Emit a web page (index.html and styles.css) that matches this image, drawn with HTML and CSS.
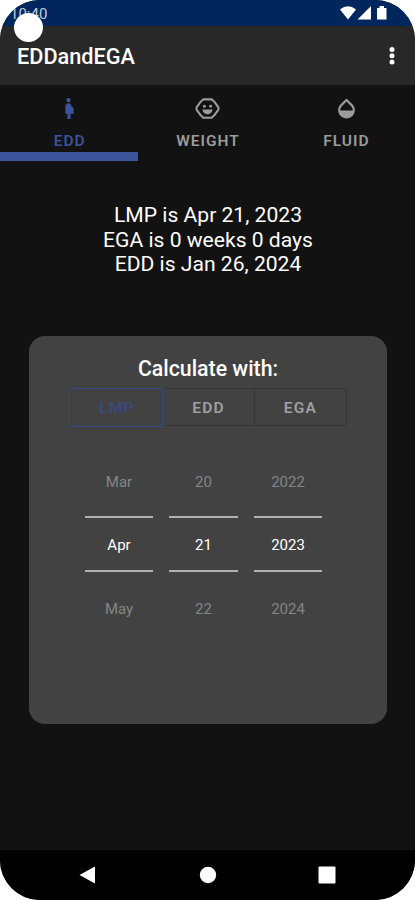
FILE: index.html
```html
<!DOCTYPE html>
<html lang="en">
<head>
    <meta charset="UTF-8">
    <meta name="viewport" content="width=device-width, initial-scale=1.0">
    <title>EDDandEGA</title>
    <link rel="stylesheet" href="styles.css">
</head>
<body>

    <div class="phone">
        <div class="status-bar">
            <span class="clock">10:40</span>
            <svg class="status-icons" width="48" height="16" viewBox="0 0 48 16">
                <path d="M0 4.5 Q8 -2 16 4.5 L8 14.5 Z"/>
                <path d="M17.5 14.5 L31 1 V14.5 Z"/>
                <path d="M37 3 H39.5 V1 H44 V3 H46.5 V14.5 H37 Z"/>
            </svg>
            <div class="camera"></div>
        </div>

        <header class="app-bar">
            <h1>EDDandEGA</h1>
            <svg class="menu-icon" width="6" height="20" viewBox="0 0 6 20">
                <circle cx="3" cy="3.500" r="2.500"/>
                <circle cx="3" cy="9.800" r="2.500"/>
                <circle cx="3" cy="16" r="2.500"/>
            </svg>
        </header>

        <nav class="tabs">
            <div class="tab active">
                <svg width="25" height="25" viewBox="0 0 24 24">
                    <path d="M9 4c0-1.110.89-2 2-2s2 .89 2 2-.89 2-2 2-2-.89-2-2zm7 9c-.01-1.340-.83-2.510-2-3 0-1.660-1.340-3-3-3s-3 1.340-3 3v7h2v5h3v-5h3v-4z"/>
                </svg>
                <span>EDD</span>
            </div>
            <div class="tab">
                <svg width="25" height="25" viewBox="0 0 24 24">
                    <path class="face-line" d="M8 3.200H16L18.500 5.500L22.500 11V13L18.500 18.500L16 20.800H8L5.500 18.500L1.500 13V11L5.500 5.500Z"/>
                    <circle cx="9" cy="9.800" r="1.400"/>
                    <circle cx="15" cy="9.800" r="1.400"/>
                    <path d="M7 13h10q-1.200 4.500-5 4.500T7 13z"/>
                </svg>
                <span>WEIGHT</span>
            </div>
            <div class="tab">
                <svg width="25" height="25" viewBox="0 0 24 24">
                    <path d="M17.660 8L12 2.350 6.340 8C4.780 9.560 4 11.640 4 13.640s.78 4.110 2.340 5.670 3.610 2.350 5.660 2.350 4.100-.79 5.660-2.350S20 15.640 20 13.640 19.220 9.560 17.660 8zM6 14c.01-2 .62-3.270 1.760-4.400L12 5.270l4.240 4.380C17.380 10.770 17.990 12 18 14H6z"/>
                </svg>
                <span>FLUID</span>
            </div>
        </nav>

        <main class="content">
            <div class="results">
                <p>LMP is Apr 21, 2023</p>
                <p>EGA is 0 weeks 0 days</p>
                <p>EDD is Jan 26, 2024</p>
            </div>

            <section class="card">
                <h2>Calculate with:</h2>
                <div class="toggle-group">
                    <button type="button" class="toggle selected">LMP</button>
                    <button type="button" class="toggle">EDD</button>
                    <button type="button" class="toggle">EGA</button>
                </div>

                <div class="date-picker">
                    <div class="picker">
                        <span class="option">Mar</span>
                        <span class="option current">Apr</span>
                        <span class="option">May</span>
                    </div>
                    <div class="picker">
                        <span class="option">20</span>
                        <span class="option current">21</span>
                        <span class="option">22</span>
                    </div>
                    <div class="picker">
                        <span class="option">2022</span>
                        <span class="option current">2023</span>
                        <span class="option">2024</span>
                    </div>
                </div>
            </section>
        </main>

        <footer class="nav-bar">
            <svg width="18" height="18" viewBox="0 0 18 18"><path d="M0.500 9 L16 0.500 V17.500 Z"/></svg>
            <svg width="18" height="18" viewBox="0 0 18 18"><circle cx="9" cy="9" r="8.200"/></svg>
            <svg width="18" height="18" viewBox="0 0 18 18"><rect x="0.500" y="0.500" width="17" height="17" rx="1"/></svg>
        </footer>
    </div>

</body>
</html>
```

FILE: styles.css
```css
/* General */
* {
    box-sizing: border-box;
}

body {
    margin: 0;
    background-color: #fff;
    font-family: Roboto, sans-serif;
    color: #fff;
}

h1,
h2,
p {
    margin: 0;
}

svg {
    display: block;
    fill: currentColor;
}

.phone {
    display: flex;
    flex-direction: column;
    width: 415px;
    height: 900px;
    background-color: #121212;
    border-radius: 40px;
    overflow: hidden;
}

/* Status bar */
.status-bar {
    position: relative;
    display: flex;
    justify-content: space-between;
    height: 26px;
    padding: 5px 27px 0 10px;
    background-color: #00265e;
}

.clock {
    font-size: 15px;
    line-height: 18px;
    color: #c3cbdc;
}

/* Front camera cutout sits over the clock */
.camera {
    position: absolute;
    top: 13px;
    left: 14px;
    width: 29px;
    height: 29px;
    border-radius: 50%;
    background-color: #fff;
}

/* App bar */
.app-bar {
    display: flex;
    justify-content: space-between;
    align-items: center;
    height: 59px;
    padding: 1px 20px 0 17px;
    background-color: #282828;
}

.app-bar h1 {
    font-size: 21.700px;
    font-weight: 500;
}

/* Tabs */
.tabs {
    display: flex;
    height: 76px;
}

.tab {
    flex: 1;
    display: flex;
    flex-direction: column;
    align-items: center;
    padding: 11px 0 0 1px;
    color: #9b9b9b;
    font-size: 15.500px;
    font-weight: 600;
    letter-spacing: 1px;
    border-bottom: 9px solid transparent;
}

.tab span {
    margin-top: 10px;
    line-height: 20px;
}

.tab.active {
    color: #3a539b;
    border-bottom-color: #3a539b;
}

.face-line {
    fill: none;
    stroke: currentColor;
    stroke-width: 2;
    stroke-linejoin: round;
}

/* Content */
.content {
    flex: 1;
    padding: 42px 28px 0 29px;
}

.results {
    font-size: 21.100px;
    line-height: 24.600px;
    text-align: center;
}

.card {
    height: 388px;
    margin-top: 59px;
    padding-top: 20px;
    background-color: #424242;
    border-radius: 16px;
}

.card h2 {
    font-size: 21.300px;
    font-weight: 500;
    line-height: 25px;
    text-align: center;
}

.toggle-group {
    display: flex;
    width: 278px;
    margin: 7px auto 0;
}

.toggle {
    flex: 1;
    height: 38px;
    padding: 2px 0 0;
    border: 1px solid #363636;
    border-left-width: 0;
    background: none;
    color: #a0a0a0;
    font-family: inherit;
    font-size: 15.500px;
    font-weight: 600;
    letter-spacing: 1.200px;
}

.toggle:last-child {
    border-radius: 0 4px 4px 0;
}

.toggle.selected {
    flex: 0 0 94px;
    height: 39px;
    padding: 1px 0 0 2px;
    border: 1px solid #35488a;
    border-radius: 4px 0 0 4px;
    color: #394a80;
}

/* Date picker */
.date-picker {
    display: flex;
    justify-content: center;
    gap: 16px;
    margin: 26px 9px 0 0;
}

.picker {
    width: 68.500px;
    text-align: center;
    font-size: 15px;
}

.option {
    display: block;
    height: 63px;
    line-height: 58px;
    color: #858585;
}

.option.current {
    height: 56px;
    line-height: 54px;
    color: #fff;
    border-top: 2px solid #b0b0b0;
    border-bottom: 2px solid #b0b0b0;
}

.option:last-child {
    line-height: 74px;
}

/* Navigation bar */
.nav-bar {
    display: flex;
    justify-content: space-between;
    height: 50px;
    padding: 16px 79px 0;
    background-color: #000;
}
```
